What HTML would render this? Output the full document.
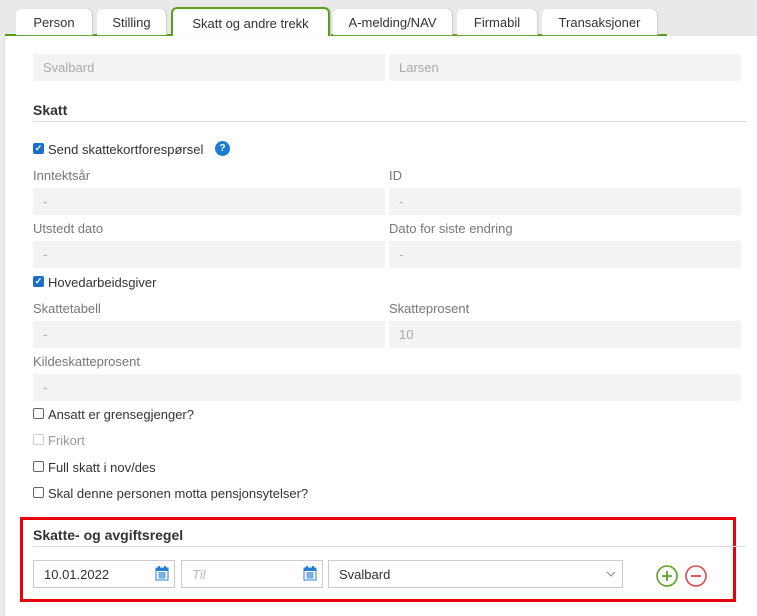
<!DOCTYPE html>
<html><head><style>
*{box-sizing:border-box;margin:0;padding:0}
body{width:757px;height:616px;overflow:hidden;background:#fff;font-family:"Liberation Sans",sans-serif;font-size:13px;color:#333;position:relative}
.a{position:absolute}
.top{left:0;top:0;width:757px;height:36px;background:#e9e9e9}
.strip{left:0;top:36px;width:5px;height:580px;background:#ececec;border-right:1px solid #ddd}
.gl{left:5px;top:34px;width:662px;height:2px;background:#5a9e1a}
.tab{top:9px;height:26px;background:#fff;border-radius:6px 6px 0 0;text-align:center;line-height:28px;font-size:13px;color:#333;box-shadow:1px 0 1px #ccc}
.act{top:7px;height:29px;border:2px solid #5a9e1a;border-bottom:none;line-height:29px;z-index:2}
.in{background:#f3f3f3;height:27px;line-height:27px;padding-left:10px;color:#aaa}
.lb{color:#777}
.h{font-weight:bold;font-size:14px;color:#333}
.hr{height:1px;background:#ddd}
.cb{width:11px;height:11px;border:1px solid #666;border-radius:2px;background:#fff}
.cbc{background:#1a6fc9;border-color:#1a6fc9;color:#fff;font-size:9px;line-height:9px;text-align:center;font-weight:bold}
.ct{left:48px}
.fi{height:28px;border:1px solid #ccc;background:#fff;line-height:27px;padding-left:10px;color:#333}
</style></head><body>
<div class="a top"></div>
<div class="a strip"></div>
<div class="a gl"></div>
<div class="a tab" style="left:16px;width:76px">Person</div>
<div class="a tab" style="left:97px;width:69px">Stilling</div>
<div class="a tab act" style="left:171px;width:159px">Skatt og andre trekk</div>
<div class="a tab" style="left:333px;width:119px">A-melding/NAV</div>
<div class="a tab" style="left:457px;width:80px">Firmabil</div>
<div class="a tab" style="left:542px;width:115px">Transaksjoner</div>

<div class="a in" style="left:33px;top:54px;width:352px">Svalbard</div>
<div class="a in" style="left:389px;top:54px;width:352px">Larsen</div>
<div class="a h" style="left:33px;top:102px">Skatt</div>
<div class="a hr" style="left:33px;top:121px;width:713px"></div>

<div class="a cb cbc" style="left:33px;top:143px">✓</div>
<div class="a ct" style="top:142px">Send skattekortforespørsel</div>
<div class="a" style="left:215px;top:141px;width:15px;height:15px;border-radius:50%;background:#1a7fd4;color:#fff;font-size:10px;font-weight:bold;text-align:center;line-height:15px">?</div>

<div class="a lb" style="left:33px;top:168px">Inntektsår</div>
<div class="a lb" style="left:389px;top:168px">ID</div>
<div class="a in" style="left:33px;top:188px;width:352px">-</div>
<div class="a in" style="left:389px;top:188px;width:352px">-</div>
<div class="a lb" style="left:33px;top:221px">Utstedt dato</div>
<div class="a lb" style="left:389px;top:221px">Dato for siste endring</div>
<div class="a in" style="left:33px;top:241px;width:352px">-</div>
<div class="a in" style="left:389px;top:241px;width:352px">-</div>

<div class="a cb cbc" style="left:33px;top:276px">✓</div>
<div class="a ct" style="top:275px">Hovedarbeidsgiver</div>
<div class="a lb" style="left:33px;top:301px">Skattetabell</div>
<div class="a lb" style="left:389px;top:301px">Skatteprosent</div>
<div class="a in" style="left:33px;top:321px;width:352px">-</div>
<div class="a in" style="left:389px;top:321px;width:352px">10</div>
<div class="a lb" style="left:33px;top:354px">Kildeskatteprosent</div>
<div class="a in" style="left:33px;top:374px;width:708px">-</div>

<div class="a cb" style="left:33px;top:408px"></div><div class="a ct" style="top:407px">Ansatt er grensegjenger?</div>
<div class="a cb" style="left:33px;top:434px;border-color:#ccc"></div><div class="a ct" style="top:433px;color:#999">Frikort</div>
<div class="a cb" style="left:33px;top:461px"></div><div class="a ct" style="top:460px">Full skatt i nov/des</div>
<div class="a cb" style="left:33px;top:487px"></div><div class="a ct" style="top:486px">Skal denne personen motta pensjonsytelser?</div>

<div class="a" style="left:20px;top:517px;width:716px;height:85px;border:3px solid #e8000b"></div>
<div class="a h" style="left:33px;top:527px">Skatte- og avgiftsregel</div>
<div class="a hr" style="left:33px;top:546px;width:713px"></div>

<div class="a fi" style="left:33px;top:560px;width:142px">10.01.2022</div>
<div class="a fi" style="left:181px;top:560px;width:142px;color:#bbb;font-style:italic">Til</div>
<div class="a fi" style="left:328px;top:560px;width:295px">Svalbard</div>
<svg class="a" style="left:155px;top:565px" width="14" height="16"><rect x="1" y="3" width="12" height="12" fill="#fff" stroke="#2a7fd4"/><rect x="1" y="3" width="12" height="3" fill="#2a7fd4"/><rect x="3" y="1" width="2" height="3" fill="#2a7fd4"/><rect x="9" y="1" width="2" height="3" fill="#2a7fd4"/><path d="M3 8h8M3 10h8M3 12h8M5 7v7M7 7v7M9 7v7" stroke="#2a7fd4" stroke-width=".8"/></svg>
<svg class="a" style="left:303px;top:565px" width="14" height="16"><rect x="1" y="3" width="12" height="12" fill="#fff" stroke="#2a7fd4"/><rect x="1" y="3" width="12" height="3" fill="#2a7fd4"/><rect x="3" y="1" width="2" height="3" fill="#2a7fd4"/><rect x="9" y="1" width="2" height="3" fill="#2a7fd4"/><path d="M3 8h8M3 10h8M3 12h8M5 7v7M7 7v7M9 7v7" stroke="#2a7fd4" stroke-width=".8"/></svg>
<svg class="a" style="left:606px;top:571px" width="10" height="7"><path d="M1 1l4 4 4-4" fill="none" stroke="#888"/></svg>
<svg class="a" style="left:655px;top:564px" width="24" height="24"><circle cx="12" cy="12" r="10" fill="none" stroke="#5aa021" stroke-width="1.6"/><path d="M12 7v10M7 12h10" stroke="#5aa021" stroke-width="1.8"/></svg>
<svg class="a" style="left:685px;top:564px" width="24" height="24"><circle cx="11" cy="12" r="10" fill="none" stroke="#e0454a" stroke-width="1.6"/><path d="M6 12h10" stroke="#e0454a" stroke-width="1.8"/></svg>
</body></html>
